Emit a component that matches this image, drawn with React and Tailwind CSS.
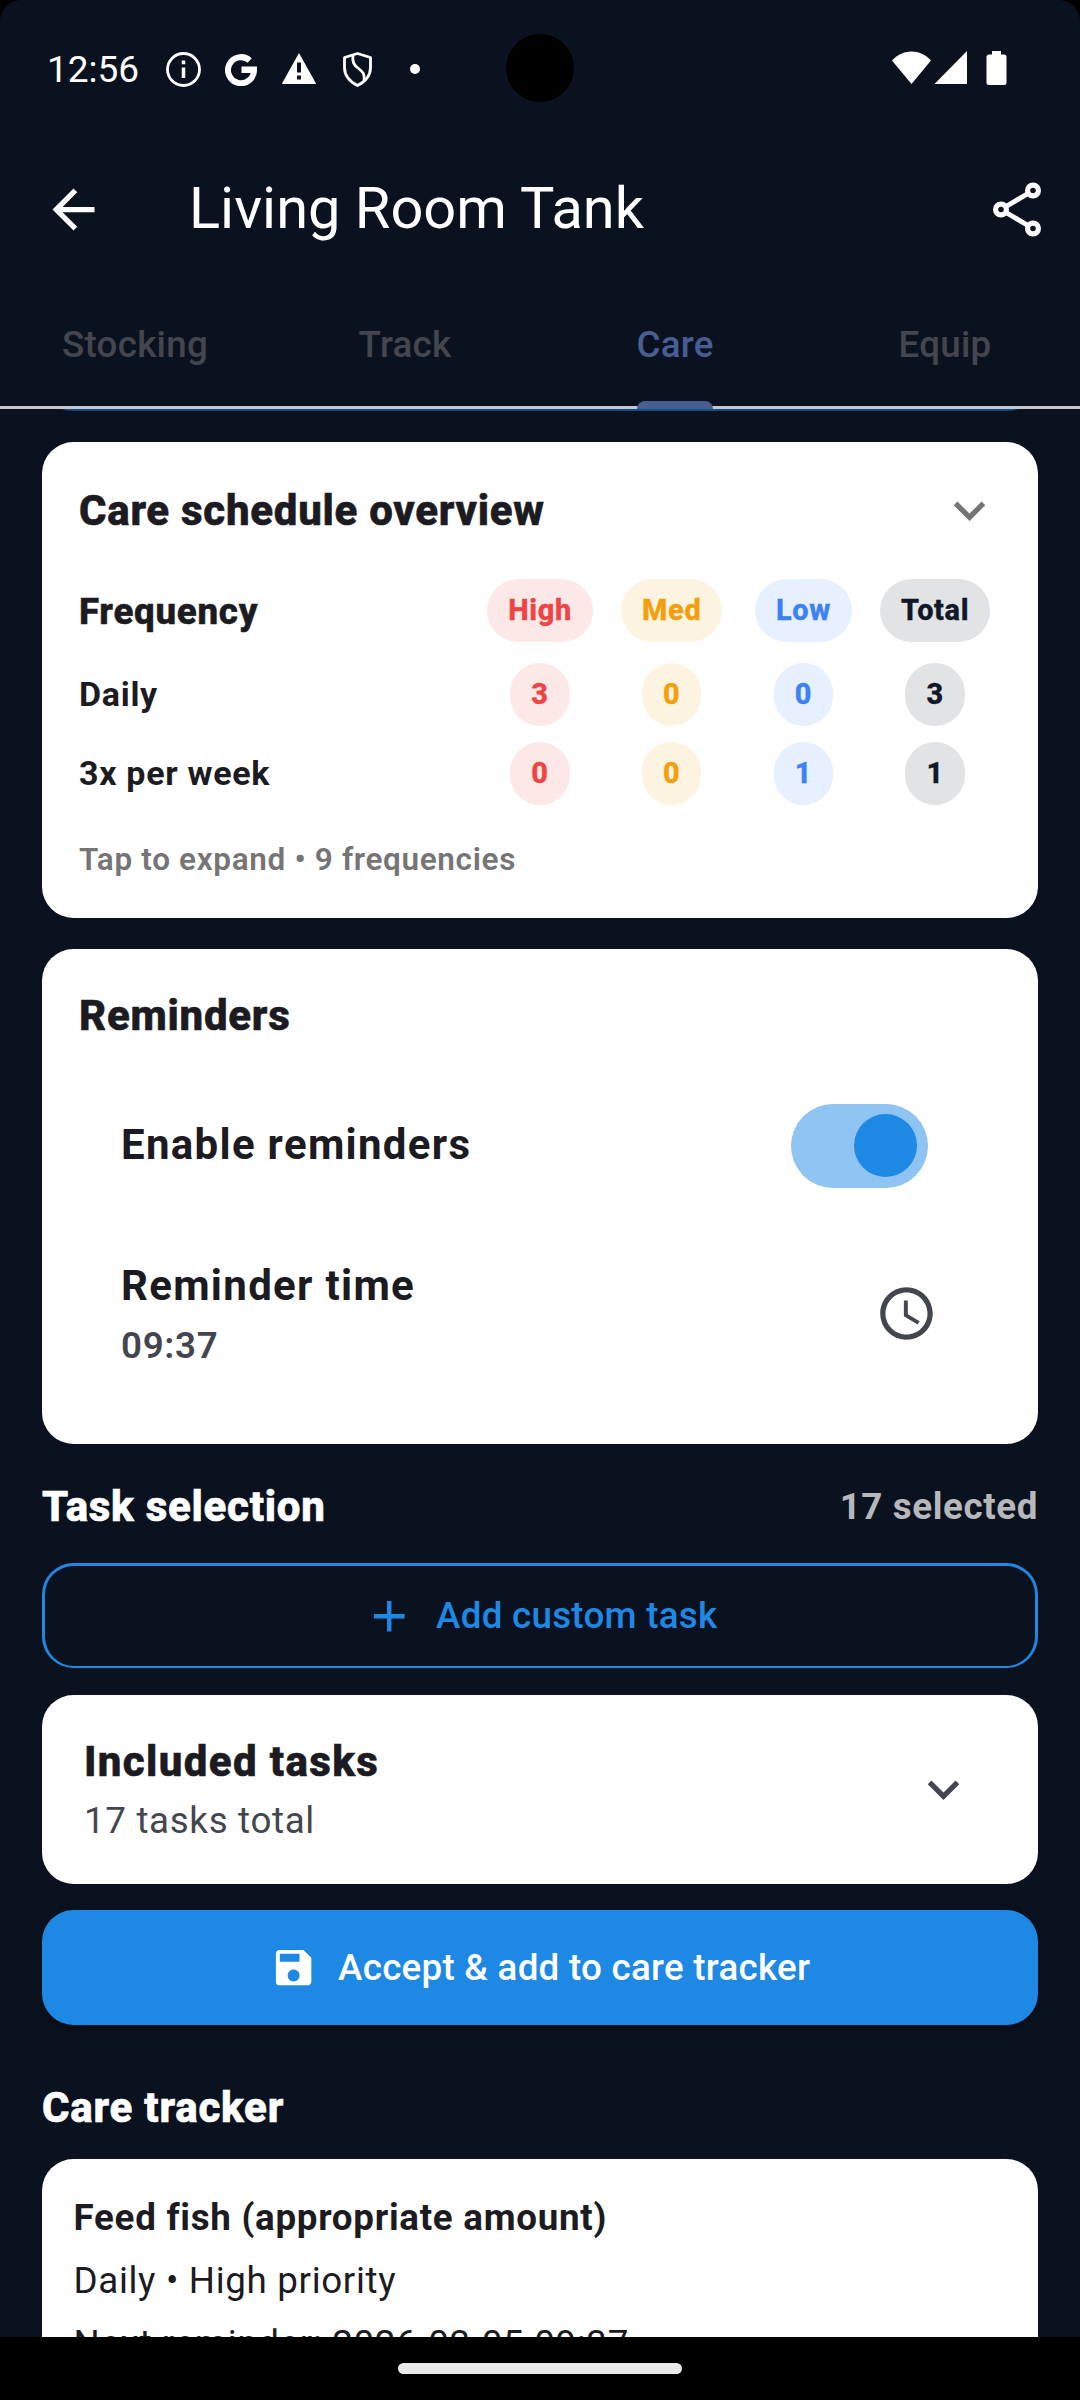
import { useState } from "react";
import {
  MdArrowBack,
  MdExpandMore,
  MdAdd,
  MdSave,
  MdSchedule,
} from "react-icons/md";

const TABS = ["Stocking", "Track", "Care", "Equip"];

const CHIP_STYLES = {
  High: "bg-[#fde8e8] text-[#ef4444]",
  Med: "bg-[#fdf3e1] text-[#f59e0b]",
  Low: "bg-[#e6f0fe] text-[#3b82f6]",
  Total: "bg-[#e2e3e5] text-[#111827]",
};

const LEVELS = ["High", "Med", "Low", "Total"];

const SCHEDULE = [
  { label: "Daily", High: 3, Med: 0, Low: 0, Total: 3 },
  { label: "3x per week", High: 0, Med: 0, Low: 1, Total: 1 },
];

function Chip({ level, children }) {
  return (
    <div className="flex justify-center">
      <span
        className={`h-[63px] px-[21px] pt-[1px] rounded-full flex items-center text-[28.9px] font-extrabold tracking-[0.66px] [-webkit-text-stroke:0.3px] ${CHIP_STYLES[level]}`}
      >
        {children}
      </span>
    </div>
  );
}

function StatusBar() {
  return (
    <div className="relative h-[136px] shrink-0 pl-[47px] pr-[48px] flex justify-between text-white">
      <div className="flex items-center h-[139px]">
        <span className="text-[37px] w-[95px]">12:56</span>
        <svg className="ml-[24px] w-[35px] h-[35px]" viewBox="0 0 35 35" fill="none">
          <circle cx="17.5" cy="17.5" r="16" stroke="white" strokeWidth="2.800" />
          <path d="M17.500 8.500v3.700M17.500 15.500V26" stroke="white" strokeWidth="3.500" />
        </svg>
        <svg className="ml-[24px] w-[32px] h-[33px]" viewBox="0 0 32 33" fill="none">
          <path
            d="M24.700 7.500A13 13 0 1 0 29 17"
            stroke="white"
            strokeWidth="6"
          />
          <path d="M16.500 13.500H32V18l-1 2H16.500Z" fill="white" />
        </svg>
        <svg className="ml-[25px] mb-[2px] w-[34px] h-[31px]" viewBox="0 0 34 31">
          <path
            d="M17 0 34 30.500 33.500 31H.5L0 30.500ZM15 9.500v10h4v-10ZM15 22.500v4h4v-4Z"
            fill="white"
            fillRule="evenodd"
          />
        </svg>
        <svg className="ml-[27px] w-[29px] h-[35px]" viewBox="0 0 29 35" fill="none">
          <path
            d="M14.500 1.500 1.500 5.500v10c0 8.500 5 14 13 18 8-4 13-9.500 13-18v-10Z"
            stroke="white"
            strokeWidth="2.800"
            strokeLinejoin="round"
          />
          <path
            d="M10 3c-1 7 1 10 5.500 13.500S22 22 21 29"
            stroke="white"
            strokeWidth="2.800"
          />
        </svg>
        <span className="ml-[38px] mb-[1px] w-[10px] h-[10px] rounded-full bg-white" />
      </div>

      {/* Camera cutout */}
      <div className="absolute left-[506px] top-[34px] w-[68px] h-[68px] rounded-full bg-black" />

      <svg
        className="mt-[50px] mr-[22px] w-[118px] h-[36px]"
        viewBox="0 0 118 36"
        fill="white"
      >
        <path d="M0 10.500C11-1.500 28-1.500 39 10.500L19.500 34Z" />
        <path d="M42.500 34 75 1v33Z" />
        <path d="M100 1h9v3.500h3a2.500 2.500 0 0 1 2.500 2.500v25.500a2.500 2.500 0 0 1-2.500 2.500H97a2.500 2.500 0 0 1-2.500-2.500V7A2.500 2.500 0 0 1 97 4.500h3Z" />
      </svg>
    </div>
  );
}

function ShareIcon() {
  return (
    <svg className="w-[48px] h-[55px]" viewBox="0 0 48 55" fill="none" stroke="white">
      <path d="M8 27.500 40 8.500M8 27.500l32 19" strokeWidth="4.800" />
      <g fill="#0b121f" strokeWidth="5.200">
        <circle cx="8" cy="27.500" r="5.400" />
        <circle cx="40" cy="8.500" r="5.400" />
        <circle cx="40" cy="46.500" r="5.400" />
      </g>
    </svg>
  );
}

export default function App() {
  const [tab, setTab] = useState("Care");
  const [remindersOn, setRemindersOn] = useState(true);

  return (
    <div className="w-[1080px] h-[2400px] bg-black font-['Roboto',sans-serif] text-[#1b1b21]">
      <div className="h-[2337px] bg-[#0b121f] rounded-t-[21px] overflow-hidden flex flex-col">
        <StatusBar />

        {/* App bar */}
        <div className="h-[147px] shrink-0 flex items-center pl-[42px] pr-[39px] text-white">
          <MdArrowBack className="w-[63px] h-[63px]" />
          <h1 className="ml-[84px] mb-[3px] flex-1 text-[57.75px] leading-[74px]">
            Living Room Tank
          </h1>
          <ShareIcon />
        </div>

        {/* Tabs */}
        <div className="h-[126px] shrink-0 grid grid-cols-4 border-b-[3px] border-[#c4c6d0]">
          {TABS.map((name) => (
            <button
              key={name}
              onClick={() => setTab(name)}
              className={`relative flex items-center justify-center text-[36.75px] font-medium tracking-[0.26px] ${name === tab ? "text-[#485e92]" : "text-[#44464f]"}`}
            >
              {name}
              {name === tab && (
                <span className="absolute -bottom-[3px] w-[76px] h-[8px] rounded-t-[8px] bg-[#485e92]" />
              )}
            </button>
          ))}
        </div>

        {/* Scrolled content */}
        <div className="flex-1 min-h-0 overflow-hidden px-[42px]">
          <div className="-mt-[103px] h-[105px] rounded-[31.5px] border-[3px] border-[#1e88e5]/50" />

          <section className="mt-[31px] h-[476px] rounded-[31.5px] bg-white px-[37px] pt-[37px]">
            <div className="flex items-center justify-between h-[63px]">
              <h2 className="text-[42px] font-extrabold tracking-[0.73px] [-webkit-text-stroke:0.6px]">
                Care schedule overview
              </h2>
              <MdExpandMore className="w-[63px] h-[63px] text-[#757575]" />
            </div>

            <div className="mt-[37px] h-[63px] grid grid-cols-[3fr_1fr_1fr_1fr_1fr] items-center">
              <span className="mt-[2px] text-[36.75px] font-extrabold tracking-[0.7px] [-webkit-text-stroke:0.5px]">
                Frequency
              </span>
              {LEVELS.map((level) => (
                <Chip key={level} level={level}>
                  {level}
                </Chip>
              ))}
            </div>
            <div className="mt-[21px] flex flex-col gap-[16px]">
              {SCHEDULE.map((row) => (
                <div
                  key={row.label}
                  className="h-[63px] grid grid-cols-[3fr_1fr_1fr_1fr_1fr] items-center"
                >
                  <span className="text-[34px] font-bold tracking-[0.7px]">
                    {row.label}
                  </span>
                  {LEVELS.map((level) => (
                    <Chip key={level} level={level}>
                      {row[level]}
                    </Chip>
                  ))}
                </div>
              ))}
            </div>

            <p className="mt-[34px] text-[31.5px] leading-[42px] font-semibold tracking-[0.66px] text-[#757575]">
              Tap to expand • 9 frequencies
            </p>
          </section>

          <section className="mt-[31px] h-[495px] rounded-[31.5px] bg-white px-[37px] pt-[35px]">
            <h2 className="text-[42px] leading-[63px] font-extrabold tracking-[0.75px] [-webkit-text-stroke:0.6px]">
              Reminders
            </h2>
            <div className="mt-[25px] h-[147px] px-[42px] flex items-center justify-between">
              <span className="mb-[3px] text-[42px] font-bold tracking-[1.3px]">
                Enable reminders
              </span>
              <button
                onClick={() => setRemindersOn(!remindersOn)}
                className={`w-[137px] h-[84px] mr-[31px] rounded-full px-[11px] flex items-center bg-[#8fc3f2] ${remindersOn ? "justify-end" : "justify-start"}`}
              >
                <span className="w-[63px] h-[63px] rounded-full bg-[#1e88e5]" />
              </button>
            </div>
            <div className="h-[189px] pl-[42px] pr-[63px] flex items-center justify-between">
              <div>
                <div className="text-[42px] leading-[63px] font-bold tracking-[1.3px]">
                  Reminder time
                </div>
                <div className="text-[36.75px] leading-[57px] font-semibold tracking-[0.66px] text-[#44464f]">
                  09:37
                </div>
              </div>
              <MdSchedule className="w-[63px] h-[63px] text-[#44464f]" />
            </div>
          </section>

          <div className="mt-[31px] h-[63px] flex items-center justify-between">
            <h2 className="text-[42px] font-extrabold tracking-[0.72px] text-white [-webkit-text-stroke:0.6px]">
              Task selection
            </h2>
            <span className="text-[36.75px] font-bold tracking-[0.6px] text-[#b6b8bc]">
              17 selected
            </span>
          </div>

          <button className="mt-[25px] w-full h-[105px] rounded-[31.5px] border-[3px] border-b-2 border-[#1e88e5] flex items-center justify-center gap-[21px] text-[#1e88e5]">
            <MdAdd className="w-[52.5px] h-[52.5px]" />
            <span className="text-[36.75px] font-medium tracking-[0.26px]">
              Add custom task
            </span>
          </button>

          <section className="mt-[27px] h-[189px] rounded-[31.5px] bg-white pl-[42px] pr-[63px] flex items-center justify-between">
            <div>
              <div className="text-[42px] leading-[63px] font-extrabold tracking-[1.38px] [-webkit-text-stroke:0.6px]">
                Included tasks
              </div>
              <div className="text-[36.75px] leading-[56px] tracking-[0.66px] text-[#44464f]">
                17 tasks total
              </div>
            </div>
            <MdExpandMore className="w-[63px] h-[63px] text-[#44464f]" />
          </section>

          <button className="mt-[26px] w-full h-[115px] rounded-[31.5px] bg-[#1e88e5] shadow-[0_3px_8px_rgba(0,0,0,0.4)] flex items-center justify-center gap-[21px] text-white">
            <MdSave className="w-[47.25px] h-[47.25px]" />
            <span className="text-[36.75px] font-medium tracking-[0.26px]">
              Accept &amp; add to care tracker
            </span>
          </button>

          <h2 className="mt-[51px] text-[42px] leading-[63px] font-extrabold tracking-[0.78px] text-white [-webkit-text-stroke:0.6px]">
            Care tracker
          </h2>

          <section className="mt-[20px] h-[260px] rounded-[31.5px] bg-white px-[31.5px] pt-[27px] text-[36.75px] leading-[63px]">
            <div className="font-bold tracking-[0.72px]">
              Feed fish (appropriate amount)
            </div>
            <div className="tracking-[0.66px]">Daily • High priority</div>
            <div className="tracking-[0.66px]">Next reminder: 2026-03-05 09:37</div>
          </section>
        </div>
      </div>

      {/* Gesture bar */}
      <div className="h-[63px] pt-[26px] flex justify-center">
        <div className="w-[284px] h-[11px] rounded-full bg-[#eaeaea]" />
      </div>
    </div>
  );
}
